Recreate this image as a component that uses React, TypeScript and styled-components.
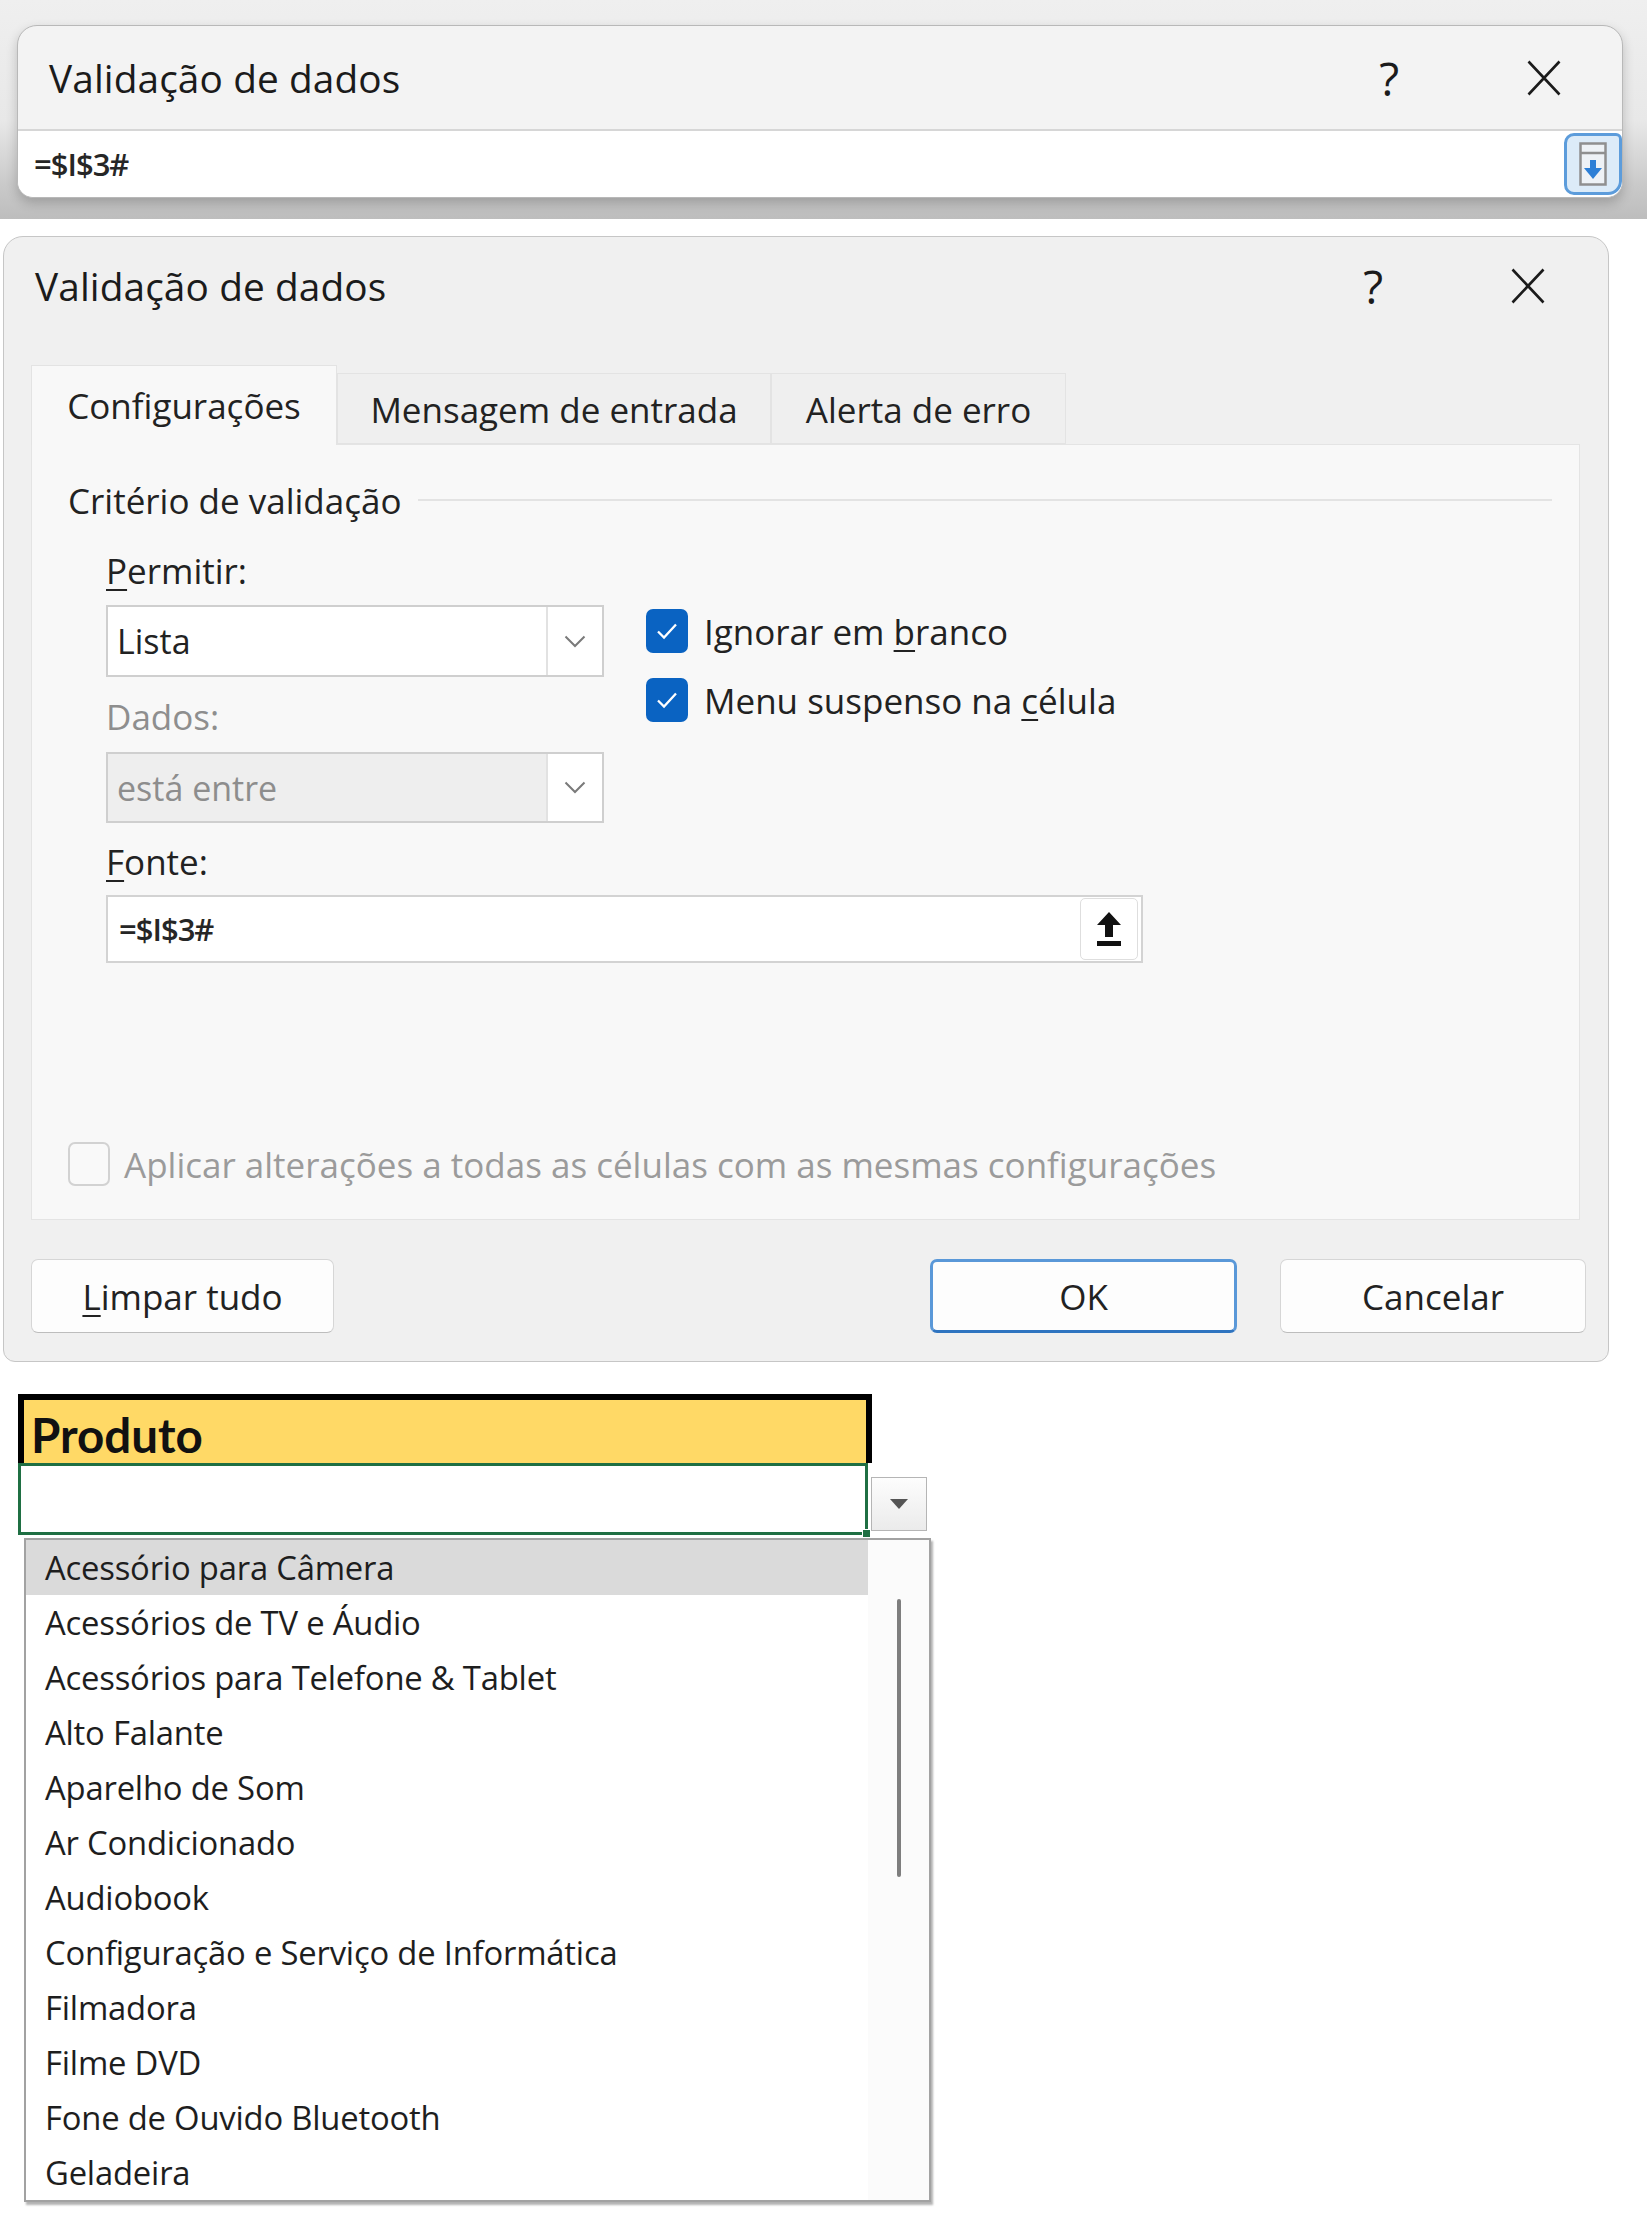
import React from 'react';
import styled, { createGlobalStyle } from 'styled-components';

const GlobalStyle = createGlobalStyle`
  html, body { margin: 0; padding: 0; background: #ffffff; }
  body { font-family: "Open Sans", "Noto Sans", sans-serif; color: #1c1c1c; }
  #root { width: 1647px; height: 2213px; overflow: hidden; }
  * { box-sizing: border-box; }
`;

const Page = styled.div`
  width: 1647px;
  height: 2213px;
  display: flex;
  flex-direction: column;
  background: #ffffff;
  overflow: hidden;
`;

/* ---------- collapsed dialog strip ---------- */
const TopStrip = styled.div`
  height: 219px;
  padding: 25px 24px 0 17px;
  background: linear-gradient(180deg, #efefef 0%, #e8e8e8 55%, #c9c9c9 85%, #bdbdbd 100%);
`;

const MiniDialog = styled.div`
  height: 173px;
  border: 1px solid #b8b8b8;
  border-radius: 20px 20px 16px 16px;
  overflow: hidden;
  display: flex;
  flex-direction: column;
  background: #f3f3f3;
  box-shadow: 0 5px 12px rgba(0, 0, 0, 0.2);
`;

const TitleBar = styled.div<{ $height: number; $divider?: boolean; $left: number; $right: number }>`
  height: ${p => p.$height}px;
  flex: none;
  display: flex;
  align-items: center;
  padding: 0 ${p => p.$right}px 0 ${p => p.$left}px;
  border-bottom: ${p => (p.$divider ? '2px solid #d6d6d6' : 'none')};
`;

const TitleText = styled.div`
  flex: 1;
  font-size: 38.8px;
  color: #1b1b1b;
  letter-spacing: 0.1px;
`;

const HelpMark = styled.div`
  font-size: 46px;
  font-weight: 400;
  color: #1b1b1b;
  line-height: 1;
  margin-right: 128px;
`;

const CloseIcon = () => (
  <svg width="34" height="36" viewBox="0 0 34 36">
    <path d="M1.5 1.5 L32.5 34.5 M32.5 1.5 L1.5 34.5" stroke="#1b1b1b" strokeWidth="2.6" fill="none" />
  </svg>
);

const MiniInputRow = styled.div`
  flex: 1;
  display: flex;
  align-items: center;
  background: #ffffff;
  padding-left: 16px;
`;

const RefText = styled.span`
  font-size: 31px;
  font-weight: 600;
  color: #262626;
  letter-spacing: -1px;
`;

const CollapseButton = styled.div`
  margin-left: auto;
  width: 58px;
  height: 62px;
  border: 3px solid #5c9cdb;
  border-radius: 10px 6px 14px 10px;
  background: #dcebf8;
  display: flex;
  align-items: center;
  justify-content: center;
`;

const ExpandIcon = () => (
  <svg width="28" height="44" viewBox="0 0 28 44">
    <rect x="1.5" y="1.5" width="25" height="41" fill="#eef2f6" stroke="#8f8f8f" strokeWidth="2.5" />
    <line x1="2" y1="11" x2="26" y2="11" stroke="#8f8f8f" strokeWidth="2.5" />
    <rect x="11" y="18" width="6" height="10" fill="#2d7fd6" />
    <path d="M5 26 L23 26 L14 37 Z" fill="#2d7fd6" />
  </svg>
);

/* ---------- full dialog ---------- */
const Dialog = styled.div`
  margin: 17px 0 0 3px;
  width: 1606px;
  height: 1126px;
  flex: none;
  border: 1px solid #c6c6c6;
  border-radius: 20px 20px 12px 12px;
  background: #f0f0f0;
  display: flex;
  flex-direction: column;
`;

const TabsRow = styled.div`
  margin: 30px 0 0 27px;
  height: 79px;
  display: flex;
  align-items: flex-end;
  position: relative;
  z-index: 1;
`;

const Tab = styled.div<{ $active?: boolean; $width: number }>`
  width: ${p => p.$width}px;
  height: ${p => (p.$active ? 80 : 71)}px;
  margin-bottom: ${p => (p.$active ? -1 : 0)}px;
  background: ${p => (p.$active ? '#f8f8f8' : '#efefef')};
  border: 1px solid #e3e3e3;
  border-bottom: ${p => (p.$active ? 'none' : '1px solid #e3e3e3')};
  display: flex;
  align-items: center;
  justify-content: center;
  font-size: 35px;
  color: #222222;
  padding-top: ${p => (p.$active ? 0 : 2)}px;
`;

const Pane = styled.div`
  margin: 0 28px 0 27px;
  height: 776px;
  flex: none;
  border: 1px solid #e4e4e4;
  background: #f8f8f8;
  display: flex;
  flex-direction: column;
  padding: 0 27px 32px 36px;
`;

const SectionHeader = styled.div`
  margin-top: 32px;
  height: 46px;
  display: flex;
  align-items: center;
  font-size: 35px;
  color: #222222;
`;

const SectionRule = styled.div`
  flex: 1;
  height: 2px;
  margin-left: 16px;
  background: #e3e3e3;
`;

const Form = styled.div`
  margin-left: 38px;
  display: flex;
  flex-direction: column;
`;

const FormRow = styled.div`
  display: flex;
`;

const LeftCol = styled.div`
  width: 498px;
  display: flex;
  flex-direction: column;
`;

const RightCol = styled.div`
  margin-left: 42px;
  padding-top: 86px;
  display: flex;
  flex-direction: column;
  gap: 25px;
`;

const FieldLabel = styled.div<{ $top: number; $disabled?: boolean }>`
  margin-top: ${p => p.$top}px;
  height: 46px;
  line-height: 46px;
  font-size: 35px;
  color: ${p => (p.$disabled ? '#8e8e8e' : '#222222')};
  u { text-decoration-thickness: 2px; text-underline-offset: 5px; }
`;

const Select = styled.div<{ $top: number; $height: number; $disabled?: boolean }>`
  margin-top: ${p => p.$top}px;
  height: ${p => p.$height}px;
  display: flex;
  border: 2px solid #cfcfcf;
  background: ${p => (p.$disabled ? '#eeeeee' : '#ffffff')};
`;

const SelectValue = styled.div<{ $disabled?: boolean }>`
  flex: 1;
  display: flex;
  align-items: center;
  padding-left: 9px;
  font-size: 34px;
  color: ${p => (p.$disabled ? '#8d8d8d' : '#222222')};
`;

const ChevronBox = styled.div`
  width: 56px;
  border-left: 2px solid #e2e2e2;
  background: #ffffff;
  display: flex;
  align-items: center;
  justify-content: center;
`;

const Chevron = () => (
  <svg width="22" height="13" viewBox="0 0 22 13">
    <path d="M1.5 1.5 L11 11 L20.5 1.5" stroke="#7a7a7a" strokeWidth="2" fill="none" />
  </svg>
);

const CheckRow = styled.div`
  height: 44px;
  display: flex;
  align-items: center;
  gap: 16px;
  font-size: 35px;
  color: #222222;
  u { text-decoration-thickness: 2px; text-underline-offset: 5px; }
`;

const Box = styled.div<{ $checked?: boolean }>`
  width: 42px;
  height: 44px;
  flex: none;
  border-radius: 7px;
  background: ${p => (p.$checked ? '#0a63c2' : '#f9f9f9')};
  border: ${p => (p.$checked ? 'none' : '2px solid #d2d2d2')};
  display: flex;
  align-items: center;
  justify-content: center;
`;

const CheckMark = () => (
  <svg width="22" height="18" viewBox="0 0 22 18">
    <path d="M2 9.5 L8 15.5 L20 2.5" stroke="#ffffff" strokeWidth="2.3" fill="none" />
  </svg>
);

const SourceInput = styled.div`
  margin-top: 10px;
  width: 1037px;
  height: 68px;
  border: 2px solid #d3d3d3;
  background: #ffffff;
  display: flex;
  align-items: center;
  padding: 2px 3px 2px 11px;
`;

const PickButton = styled.div`
  margin-left: auto;
  width: 58px;
  height: 62px;
  border: 1px solid #dedede;
  border-radius: 5px;
  background: #ffffff;
  display: flex;
  align-items: center;
  justify-content: center;
`;

const UploadIcon = () => (
  <svg width="26" height="36" viewBox="0 0 26 36">
    <path d="M13 1 L25 14 L17 14 L17 26 L9 26 L9 14 L1 14 Z" fill="#111" />
    <rect x="1" y="30" width="24" height="5" fill="#111" />
  </svg>
);

const ApplyRow = styled.div`
  margin-top: auto;
  height: 46px;
  display: flex;
  align-items: center;
  gap: 14px;
  font-size: 35px;
  color: #9b9b9b;
`;

const Footer = styled.div`
  margin-top: 39px;
  display: flex;
  padding: 0 22px 0 27px;
`;

const Button = styled.div<{ $primary?: boolean; $width: number; $gap?: number }>`
  width: ${p => p.$width}px;
  height: 74px;
  margin-left: ${p => (p.$gap === undefined ? 0 : p.$gap)}px;
  border-radius: 7px;
  background: #fdfdfd;
  border: ${p => (p.$primary ? '3px solid #5a98d8' : '1px solid #d6d6d6')};
  border-bottom-color: ${p => (p.$primary ? '#2f74c0' : '#bdbdbd')};
  display: flex;
  align-items: center;
  justify-content: center;
  font-size: 35px;
  color: #222222;
  u { text-decoration-thickness: 2px; text-underline-offset: 5px; }
`;

const Spacer = styled.div`
  flex: 1;
`;

/* ---------- spreadsheet ---------- */
const Sheet = styled.div`
  margin-top: 32px;
  padding-left: 18px;
  display: flex;
  flex-direction: column;
`;

const HeaderCell = styled.div`
  width: 854px;
  height: 69px;
  border: 6px solid #000000;
  border-bottom: none;
  background: #ffd966;
  display: flex;
  align-items: center;
  padding: 5px 0 0 7px;
  font-family: "Lato", "Open Sans", sans-serif;
  font-weight: 700;
  font-size: 47.5px;
  color: #111111;
`;

const CellRow = styled.div`
  display: flex;
  align-items: flex-start;
`;

const ActiveCell = styled.div`
  width: 850px;
  height: 72px;
  border: 3px solid #1f6f43;
  background: #ffffff;
  position: relative;
`;

const FillHandle = styled.div`
  position: absolute;
  right: -6px;
  bottom: -6px;
  width: 9px;
  height: 9px;
  background: #1f6f43;
  border: 1px solid #ffffff;
`;

const DropButton = styled.div`
  margin: 14px 0 0 3px;
  width: 56px;
  height: 54px;
  border: 1px solid #b5b5b5;
  background: linear-gradient(180deg, #fdfdfd, #ebebeb);
  display: flex;
  align-items: center;
  justify-content: center;
`;

const DropList = styled.div`
  margin: 3px 0 0 6px;
  width: 907px;
  height: 664px;
  border: 2px solid #a2a2a2;
  box-shadow: 2px 3px 2px rgba(0, 0, 0, 0.3);
  background: #ffffff;
  display: flex;
`;

const Items = styled.div`
  width: 842px;
  display: flex;
  flex-direction: column;
`;

const Item = styled.div<{ $active?: boolean }>`
  height: 55px;
  flex: none;
  display: flex;
  align-items: center;
  padding-left: 19px;
  font-size: 32.8px;
  color: #1e1e1e;
  background: ${p => (p.$active ? '#dadada' : 'transparent')};
  letter-spacing: -0.2px;
`;

const ScrollTrack = styled.div`
  flex: 1;
  background: #fbfbfb;
  display: flex;
  justify-content: center;
`;

const ScrollThumb = styled.div`
  margin-top: 59px;
  width: 4px;
  height: 278px;
  border-radius: 2px;
  background: #7e7e7e;
`;

const items = [
  'Acessório para Câmera',
  'Acessórios de TV e Áudio',
  'Acessórios para Telefone & Tablet',
  'Alto Falante',
  'Aparelho de Som',
  'Ar Condicionado',
  'Audiobook',
  'Configuração e Serviço de Informática',
  'Filmadora',
  'Filme DVD',
  'Fone de Ouvido Bluetooth',
  'Geladeira',
];

export default function App() {
  return (
    <>
      <GlobalStyle />
      <Page>
        <TopStrip>
          <MiniDialog>
            <TitleBar $height={105} $divider $left={31} $right={61}>
              <TitleText>Validação de dados</TitleText>
              <HelpMark>?</HelpMark>
              <CloseIcon />
            </TitleBar>
            <MiniInputRow>
              <RefText>=$I$3#</RefText>
              <CollapseButton>
                <ExpandIcon />
              </CollapseButton>
            </MiniInputRow>
          </MiniDialog>
        </TopStrip>

        <Dialog>
          <TitleBar $height={98} $left={31} $right={63}>
            <TitleText>Validação de dados</TitleText>
            <HelpMark>?</HelpMark>
            <CloseIcon />
          </TitleBar>
          <TabsRow>
            <Tab $active $width={306}>Configurações</Tab>
            <Tab $width={434}>Mensagem de entrada</Tab>
            <Tab $width={295}>Alerta de erro</Tab>
          </TabsRow>
          <Pane>
            <SectionHeader>
              Critério de validação
              <SectionRule />
            </SectionHeader>
            <Form>
              <FormRow>
                <LeftCol>
                  <FieldLabel $top={25}><u>P</u>ermitir:</FieldLabel>
                  <Select $top={11} $height={72}>
                    <SelectValue>Lista</SelectValue>
                    <ChevronBox><Chevron /></ChevronBox>
                  </Select>
                  <FieldLabel $top={17} $disabled>Dados:</FieldLabel>
                  <Select $top={12} $height={71} $disabled>
                    <SelectValue $disabled>está entre</SelectValue>
                    <ChevronBox><Chevron /></ChevronBox>
                  </Select>
                </LeftCol>
                <RightCol>
                  <CheckRow>
                    <Box $checked><CheckMark /></Box>
                    <span>Ignorar em <u>b</u>ranco</span>
                  </CheckRow>
                  <CheckRow>
                    <Box $checked><CheckMark /></Box>
                    <span>Menu suspenso na <u>c</u>élula</span>
                  </CheckRow>
                </RightCol>
              </FormRow>
              <FieldLabel $top={16}><u>F</u>onte:</FieldLabel>
              <SourceInput>
                <RefText>=$I$3#</RefText>
                <PickButton><UploadIcon /></PickButton>
              </SourceInput>
            </Form>
            <ApplyRow>
              <Box />
              <span>Aplicar alterações a todas as células com as mesmas configurações</span>
            </ApplyRow>
          </Pane>
          <Footer>
            <Button $width={303}><u>L</u>impar tudo</Button>
            <Spacer />
            <Button $primary $width={307}>OK</Button>
            <Button $width={306} $gap={43}>Cancelar</Button>
          </Footer>
        </Dialog>

        <Sheet>
          <HeaderCell>Produto</HeaderCell>
          <CellRow>
            <ActiveCell>
              <FillHandle />
            </ActiveCell>
            <DropButton>
              <svg width="20" height="12" viewBox="0 0 20 12">
                <path d="M1 1 L19 1 L10 11 Z" fill="#555555" />
              </svg>
            </DropButton>
          </CellRow>
          <DropList>
            <Items>
              {items.map((t, i) => (
                <Item key={t} $active={i === 0}>{t}</Item>
              ))}
            </Items>
            <ScrollTrack>
              <ScrollThumb />
            </ScrollTrack>
          </DropList>
        </Sheet>
      </Page>
    </>
  );
}
